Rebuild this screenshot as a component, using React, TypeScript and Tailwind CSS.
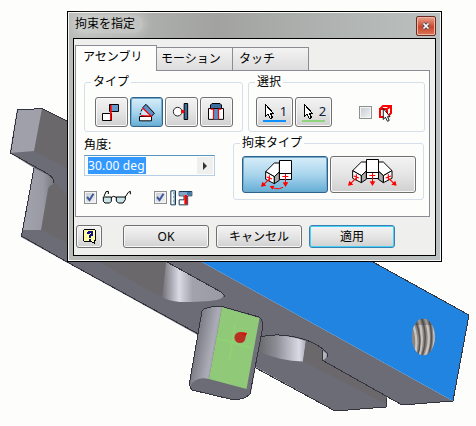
import React from 'react';

const FONT = "font-['Noto_Sans','Noto_Sans_CJK_JP',sans-serif]";

function Scene() {
  return (
    <svg className="absolute inset-0" width="476" height="426" viewBox="0 0 476 426">
      <defs>
        <linearGradient id="stem" x1="0" x2="1"><stop offset="0" stopColor="#a4a4ae" /><stop offset=".65" stopColor="#9999a3" /><stop offset="1" stopColor="#77777f" /></linearGradient>
        <linearGradient id="cavity" x1="0" x2="1"><stop offset="0" stopColor="#706f76" /><stop offset=".28" stopColor="#dadae6" /><stop offset=".5" stopColor="#a2a2ac" /><stop offset="1" stopColor="#9a9aa4" /></linearGradient>
        <linearGradient id="slot" x1="0" x2="1"><stop offset="0" stopColor="#6c6b70" /><stop offset=".35" stopColor="#8c8c94" /><stop offset=".85" stopColor="#dadae6" /><stop offset="1" stopColor="#aaaab6" /></linearGradient>
        <linearGradient id="pin" gradientUnits="userSpaceOnUse" x1="195" y1="340" x2="217" y2="344"><stop offset="0" stopColor="#77777f" /><stop offset=".8" stopColor="#acacb8" /><stop offset="1" stopColor="#a2a2ae" /></linearGradient>
        <clipPath id="hole"><ellipse cx="423.3" cy="337" rx="11.5" ry="18.3" /></clipPath>
      </defs>
      <path d="M17 110L42 108.500L80 127V262H202L453 401L402 405L387 397L386 407L335 411L21 237L34 168L10 153Z" fill="#6c6c76" />
      <path d="M42 108.500L80 127V175L34 151Z" fill="#6b686b" />
      <path d="M17.500 110L42 108.500L34 151L10 153Z" fill="#a0a0aa" />
      <path d="M49 188L54 181L67 195V243L41 230Z" fill="#6b686b" />
      <path d="M67 195L80 202V251L67 243.500Z" fill="#6b686b" />
      <path d="M34 168L46 174Q54 178 54 184Q49 185 48 189L41 230L23 230Z" fill="url(#stem)" />
      <path d="M98 261H169L163 297Q145 289 130 279.500Z" fill="#6b686b" />
      <path d="M168 262L221 292Q227 297 217 300Q203 302 180 302Q168 301 162 297Q164 282 166 262Z" fill="url(#cavity)" />
      <path d="M202 262H373L469 315L453 401Z" fill="#2184e0" />
      <path d="M260 337Q280 332 306 341L303 361.500Q280 361 260 352Z" fill="url(#slot)" />
      <path d="M306 340Q316 344 322 349V360L386 397V404L303 361Z" fill="#6b686b" />
      <path d="M322 350L327 354L326 358L322 361Z" fill="#b4b4bf" />
      <g fill="none" stroke="#33333d" strokeWidth="1" shapeRendering="crispEdges">
        <path d="M67 121L42 108.500L17.500 110L10.500 153L48 174Q55 179 54 183M34 168L21.500 236L67 262L202 336M254 367L335 411L386 407L386.500 398M167 262L221 292Q225 295 224 297M260 337Q278 332 303 339Q319 344 327 353L327 357M322 350V360L402 405L453 401L469 315L373 262" />
      </g>
      <path d="M202 311Q205 306 222 306.500L259 317Q263 320 263 326L250 394Q243 401 230 399L192 390L189.500 383Z" fill="#6c6c76" />
      <path d="M202 311Q205 306 222 306.500L209 379Q196 376 190 386Z" fill="url(#pin)" />
      <path d="M258 318L263 325L251 392L246 389Z" fill="#707078" />
      <path d="M222 307L259.500 318L246.500 389L209 379Z" fill="#90c978" />
      <path d="M202 311Q205 306 222 306.500L259 317Q263 320 263 326L250 394Q243 401 230 399L192 390Q189 387 190 380Z" fill="none" stroke="#33333d" shapeRendering="crispEdges" />
      <path d="M216 338L252 348M235 324L229.500 360" stroke="#8fdc6c" fill="none" strokeWidth=".8" />
      <path d="M240 332L247 333L244 340Z" fill="#e01410" />
      <circle cx="240" cy="337.500" r="5.500" fill="#b83022" />
      <path d="M241 332.500L247 333L245 336Z" fill="#d81008" />
      <g clipPath="url(#hole)" fill="none">
        <path d="M410 315H438V358H410Z" fill="#8a8581" stroke="none" />
        <path d="M411 319Q420 340 414 358M418 316Q425 338 419 357M424 315Q433 338 425 356M431 315Q438 338 431 356" stroke="#c8c4c0" strokeWidth="2.300" />
        <path d="M414 318Q424 338 417 358M421 316Q429 338 422 356M428 315Q435 338 428 356" stroke="#5b5552" strokeWidth="1.500" />
        <path d="M411 317H436V325H411Z" fill="#3c3835" opacity=".3" />
      </g>
    </svg>
  );
}

const face = 'flex items-center justify-center rounded-[3px] border border-[#707070] bg-linear-to-b from-[#f3f3f3] via-[#e4e5e4] to-[#cfd0cf] shadow-[inset_0_0_0_1px_#f8f8f8]';
const activeFace = 'flex items-center justify-center rounded-[3px] border border-[#2c628b] bg-linear-to-b from-[#d7edf9] from-0% via-[#a9d5ed] via-50% to-[#64aed6] to-100% shadow-[inset_0_0_0_1px_#70a9c9]';

function Icon({ w, h, box, children }: { w: number; h: number; box: string; children: React.ReactNode }) {
  return (
    <svg className="shrink-0" width={w} height={h} viewBox={box} fill="none" stroke="#000" strokeWidth="3">
      {children}
    </svg>
  );
}

function Group({ title, className, children }: { title: string; className: string; children: React.ReactNode }) {
  return (
    <section className={`flex flex-col rounded-[3px] border border-[#d5dfe9] ${className}`}>
      <h2 className="-mt-[10px] ml-[6px] h-[18px] self-start bg-[#fdfefc] px-[2px] text-[12px] leading-[18px]">{title}</h2>
      {children}
    </section>
  );
}

function Check({ on = false }: { on?: boolean }) {
  return (
    <span className="flex size-[13px] shrink-0 items-center justify-center border border-[#8e8f8f] bg-linear-to-br from-[#c5cad2] to-[#f4f4f4] shadow-[inset_0_0_0_1px_#f4f4f4]">
      {on && (
        <svg width="9" height="9" viewBox="0 0 9 9" fill="none" stroke="#40589c" strokeWidth="2"><path d="M1 4L3.500 7L7.500 .8" /></svg>
      )}
    </span>
  );
}

function Pointer() {
  return <path d="M1.500 .5V12.500L4 10L6.500 14.500L8.500 13.500L6.500 9.500H9.500L1.500 .5Z" fill="#fff" stroke="#000" strokeWidth="1" />;
}

function SelectButton({ n, line }: { n: string; line: string }) {
  return (
    <button className={`${face} h-[30px] w-[37px] flex-col`}>
      <span className="flex h-[17px] items-center gap-[6px] pl-[2px]">
        <svg width="10" height="15" viewBox="0 0 10 15" shapeRendering="crispEdges"><Pointer /></svg>
        <span className="text-[13px] leading-[15px] text-[#101c3b]">{n}</span>
      </span>
      <span className={`h-[2px] w-[23px] ${line}`} />
    </button>
  );
}

function AngledBlock() {
  return (
    <>
      <path d="M77 50L103 24H118V51L103 65L77 50Z" fill="#fff" />
      <path d="M77 50L103 65V86L77 73Z" fill="#fff" />
      <path d="M103 65L118 51V76L103 86Z" fill="#aaa" />
      <path d="M88 61V78M80 66L96 72M87 73L68 91" stroke="#f00" strokeWidth="3.500" />
      <path d="M63 95L67 80L79 92Z" fill="#f00" stroke="none" />
    </>
  );
}

function CenterBlock() {
  return (
    <>
      <path d="M118.500 16.500H154.500V55.500H118.500ZM118.500 55.500H154.500V73.500H118.500Z" fill="#fff" />
      <path d="M136.500 57V88M127 64.500H145" stroke="#f00" />
      <path d="M128 82H145L136.500 96Z" fill="#f00" stroke="none" />
    </>
  );
}

export default function App() {
  return (
    <main className={`relative h-[426px] w-[476px] overflow-hidden bg-[#fdfefc] text-[12px] text-black ${FONT}`}>
      <Scene />
      <div className="absolute left-[67px] top-[11px] flex h-[251px] w-[375px] flex-col border border-black bg-linear-to-r from-[#b9bcb9] from-0% via-[#a2a3a0] via-40% to-[#bcc2c1] to-100% px-[5px] pb-[5px] shadow-[inset_0_0_0_1px_#f4f4f4]">
        <header className="flex h-[26px] shrink-0 items-start justify-between pl-[2px]">
          <h1 className="mt-[3px] rounded-full bg-white/25 pr-2 text-[12px] leading-[18px] shadow-[0_0_8px_3px_rgba(255,255,255,0.25)]">拘束を指定</h1>
          <button className="mt-[4px] flex h-[20px] w-[20px] items-center justify-center rounded-[2px] border border-[#672c24] bg-linear-to-b from-[#e9a18e] from-0% via-[#c9452c] via-55% to-[#d97553] to-100% shadow-[inset_0_0_0_1px_#efb6a5]">
            <svg width="8" height="8" viewBox="0 0 8 8"><path d="M1.500 1.500L6.500 6.500M6.500 1.500L1.500 6.500" stroke="#4b4f5c" strokeWidth="3.300" /><path d="M1.500 1.500L6.500 6.500M6.500 1.500L1.500 6.500" stroke="#fff" strokeWidth="1.700" /></svg>
          </button>
        </header>
        <div className="flex min-h-0 flex-1 flex-col border border-black bg-[#eff0ee] pl-px pt-[6px]">
          <nav className="z-10 -mb-px flex h-[26px] shrink-0 items-start leading-[18px]">
            <span className="h-[26px] w-[82px] border border-b-0 border-[#898c95] bg-[#fdfefc] pl-[7px] pt-[2px]">アセンブリ</span>
            <span className="mt-[2px] h-[24px] w-[76px] border border-l-0 border-[#898c95] bg-linear-to-b from-[#f3f3f3] to-[#dcdddc] pl-[4px] pt-[2px]">モーション</span>
            <span className="mt-[2px] h-[24px] w-[76px] border border-l-0 border-[#898c95] bg-linear-to-b from-[#f3f3f3] to-[#dcdddc] pl-[6px] pt-[2px]">タッチ</span>
          </nav>
          <div className="h-[147px] w-[355px] shrink-0 border border-[#898c95] bg-[#fdfefc] pl-[8px] pt-[11px]">
            <div className="flex gap-[5px]">
              <Group title="タイプ" className="h-[50px] w-[159px]">
                <div className="ml-[10px] mt-[6px] flex gap-[2px]">
                  <button className={`${face} h-[30px] w-[33px]`}>
                    <Icon w={31} h={28} box="18 24 93 84">
                      <path d="M37.500 70.500H64.500V91.500H37.500Z" fill="#fff" />
                      <path d="M58.500 43.500H85.500V64.500H58.500Z" fill="#6798cc" />
                      <path d="M62.500 45V90" stroke="#f00" strokeWidth="5" />
                    </Icon>
                  </button>
                  <button className={`${activeFace} h-[30px] w-[33px]`}>
                    <Icon w={31} h={28} box="123 24 93 84">
                      <path d="M154 78L159 53L184 78Z" fill="#cfe6f4" stroke="none" />
                      <path d="M148.500 79.500H184.500V92.500H148.500Z" fill="#fff" />
                      <path d="M158 53L168 43L193 70L184 79Z" fill="#5b8fc6" />
                      <path d="M151 74V69M153 64L157 56" />
                      <path d="M158 54L183 78L153 77" stroke="#f00" strokeWidth="3.500" />
                    </Icon>
                  </button>
                  <button className={`${face} h-[30px] w-[33px]`}>
                    <Icon w={31} h={28} box="3 24 93 84">
                      <circle cx="38" cy="65" r="13" fill="#fff" strokeWidth="2.500" />
                      <path d="M57.500 40.500H68V88.500H57.500Z" fill="#3b6e9e" />
                      <circle cx="53.500" cy="64.500" r="5.500" fill="#f00" stroke="none" />
                    </Icon>
                  </button>
                  <button className={`${face} h-[30px] w-[33px]`}>
                    <Icon w={31} h={28} box="108 24 93 84">
                      <path d="M130.500 55.500H175.500V88H130.500Z" fill="#fff" />
                      <path d="M146 55H160V88H146Z" fill="#5b8fc6" stroke="none" />
                      <path d="M141 40.500H165L169.500 45V55.500H136.500V45Z" fill="#3b6e9e" />
                      <path d="M137 57.500H145.500V88M169 57.500H160.500V88" stroke="#f00" strokeWidth="3.500" />
                    </Icon>
                  </button>
                </div>
              </Group>
              <Group title="選択" className="h-[50px] w-[177px]">
                <div className="ml-[7px] mt-[6px] flex items-center gap-[2px]">
                  <SelectButton n="1" line="bg-[#1090ff]" />
                  <SelectButton n="2" line="bg-[#8fd47c]" />
                  <span className="ml-[25px]"><Check /></span>
                  <svg className="ml-[4px] mt-[1px]" width="15" height="18" viewBox="0 0 15 18" fill="none">
                    <path d="M2 5H9V13H2ZM2 5L5 2H13V9L9 13M9 5L13 2" stroke="#f00" strokeWidth="2" />
                    <g transform="translate(4 4) scale(.85 .92)"><Pointer /></g>
                  </svg>
                </div>
              </Group>
            </div>
            <div className="flex">
              <div className="w-[149px] pt-[4px]">
                <div className="h-[19px] leading-[18px]">角度:</div>
                <div className="flex h-[21px] w-[131px] border border-[#b5cfe7] border-t-[#5794bf] p-px pl-[3px]">
                  <span className="h-[17px] w-[58px] whitespace-nowrap bg-[#3399ff] font-['Noto_Sans'] text-[12px] leading-[17px] tracking-[0.15px] text-white">30.00 deg</span>
                  <span className="ml-auto flex w-[16px] items-center justify-center bg-[#eff0ee]"><span className="border-y-[4px] border-l-[4px] border-y-transparent border-l-[#333]" /></span>
                </div>
                <div className="mt-[13px] flex h-[17px] items-center">
                  <Check on />
                  <svg className="ml-[5px]" width="30" height="15" viewBox="84 27 90 45" fill="none" stroke="#000" strokeWidth="3">
                    <path d="M88 48H112V61L107 66H93L88 61ZM127 48H154V56L147 66H133L127 60Z" fill="#c9e5ea" />
                    <path d="M112 49L119 46L127 49M90 46L96 32L103 31V39M153 49L163 34L169 31V40" />
                  </svg>
                  <span className="ml-[22px] flex items-center">
                    <Check on />
                    <svg className="ml-[3px]" width="24" height="16" viewBox="290 25 72 48">
                      <path d="M292.500 27.500H306.500V69.500H292.500Z" fill="#fff" stroke="#163954" strokeWidth="3" />
                      <path d="M299 34H306M301 40H306M299 46H306M301 52H306M299 58H306M301 64H306" stroke="#163954" strokeWidth="2.500" />
                      <path d="M317.500 29.500H355.500V42.500H343V69.500H317.500V54.500H332V42.500H317.500Z" fill="#fff" stroke="#163954" strokeWidth="3" />
                      <path d="M319 31H341V41H319Z" fill="#80a7cb" /><path d="M341 31H354V41H341Z" fill="#407baa" />
                      <path d="M333 40H341V68H333Z" fill="#f00" />
                    </svg>
                  </span>
                </div>
              </div>
              <Group title="拘束タイプ" className="mt-[11px] h-[57px] w-[191px]">
                <div className="ml-[8px] mt-[4px] flex gap-[2px]">
                  <button className={`h-[37px] w-[86px] ${activeFace}`}>
                    <Icon w={84} h={35} box="9 6 252 105">
                      <AngledBlock /><CenterBlock />
                      <path d="M129 97L118 101H107L96 97" stroke="#f00" />
                      <path d="M89 93L103 92L97 104Z" fill="#f00" stroke="none" />
                    </Icon>
                  </button>
                  <button className={`h-[37px] w-[86px] ${face}`}>
                    <Icon w={84} h={35} box="9 6 252 105">
                      <g transform="translate(-3 -3)">
                        <AngledBlock />
                        <g transform="matrix(-1 0 0 1 272 0)"><AngledBlock /></g>
                        <CenterBlock />
                      </g>
                    </Icon>
                  </button>
                </div>
              </Group>
            </div>
          </div>
          <footer className="mt-[8px] flex pl-px leading-[18px]">
            <button className={`${face} h-[23px] w-[26px]`}>
              <svg width="15" height="17" viewBox="0 0 15 17" shapeRendering="crispEdges">
                <path d="M2.500 1.500H12.500L13.500 2.500V12.500H12.500V15.500L9.500 13.500H2.500L1.500 12.500V2.500Z" fill="#ffff9e" stroke="#000" />
                <path d="M5 5H6.500V4H9.500V7L7.500 8.500V10M7.500 11V12.500" fill="none" stroke="#10108a" strokeWidth="2" />
              </svg>
            </button>
            <button className={`${face} ml-[21px] h-[23px] w-[86px]`}>OK</button>
            <button className={`${face} ml-[7px] h-[23px] w-[86px]`}>キャンセル</button>
            <button className="ml-[7px] flex h-[23px] w-[86px] items-center justify-center rounded-[3px] border border-[#3c7fb1] bg-linear-to-b from-[#f3f3f3] via-[#e4e5e4] to-[#cfd0cf] shadow-[inset_0_0_0_1px_#45d2f8]">適用</button>
          </footer>
        </div>
      </div>
    </main>
  );
}
